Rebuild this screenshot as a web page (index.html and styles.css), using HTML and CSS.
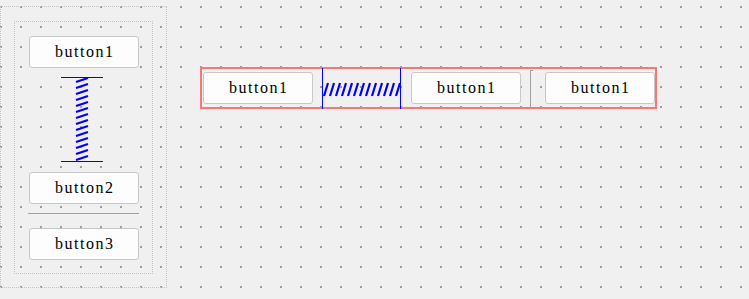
FILE: index.html
```html
<!DOCTYPE html>
<html lang="en">
<head>
    <meta charset="UTF-8">
    <title>Form</title>
    <link rel="stylesheet" href="styles.css">
</head>
<body>
<div class="form">
    <!-- vertical layout -->
    <div class="frame">
        <div class="vbox">
            <button class="btn">button1</button>
            <div class="vspacer">
                <svg width="42" height="85" viewBox="0 0 42 85">
                    <path class="edge" d="M0 0.5H42M0 84.5H42" />
                    <path class="coil" d="M15 5L27 1M15 11L27 7M15 17L27 13M15 23L27 19M15 29L27 25M15 35L27 31M15 41L27 37M15 47L27 43M15 53L27 49M15 59L27 55M15 65L27 61M15 71L27 67M15 77L27 73M15 83L27 79" />
                </svg>
            </div>
            <button class="btn btn-gap">button2</button>
            <div class="hline"></div>
            <button class="btn btn-sep">button3</button>
        </div>
    </div>

    <!-- horizontal layout -->
    <div class="hbox">
        <button class="btn">button1</button>
        <div class="hspacer">
            <svg width="79" height="41" viewBox="0 0 79 41">
                <path class="edge" d="M0.5 0V41M78.5 0V41" />
                <path class="coil" d="M2 28L6 15M8 28L12 15M14 28L18 15M20 28L24 15M26 28L30 15M32 28L36 15M38 28L42 15M44 28L48 15M50 28L54 15M56 28L60 15M62 28L66 15M68 28L72 15M74 28L78 15" />
            </svg>
        </div>
        <button class="btn btn-h">button1</button>
        <div class="vline"></div>
        <button class="btn btn-last">button1</button>
    </div>
</div>
</body>
</html>
```

FILE: styles.css
```css
* {
    margin: 0;
    padding: 0;
    box-sizing: border-box;
}
html, body {
    width: 749px;
    height: 299px;
    overflow: hidden;
}
body {
    background: #f0f0f0;
}
/* designer grid: 2px dots every 20px */
.form {
    position: relative;
    width: 749px;
    height: 299px;
    background: conic-gradient(from 0deg at 2px 2px, transparent 75%, #9c9c9c 0) 0 6px / 20px 20px;
}
.btn {
    flex: none;
    width: 110px;
    height: 32px;
    border: 1px solid #c8c8c8;
    border-radius: 3px;
    background: #fdfdfd;
    color: #000;
    font: 16px "Liberation Serif", "DejaVu Serif", serif;
    letter-spacing: 1.5px;
    text-indent: 1.5px;
    text-align: center;
}
/* left: dotted frame holding a vertical layout */
.frame {
    position: absolute;
    left: 0;
    top: 6px;
    width: 167px;
    height: 282px;
    border: 1px dotted #c4c4c4;
    padding: 14px 0 0 13px;
}
.vbox {
    display: flex;
    flex-direction: column;
    width: 139px;
    height: 253px;
    border: 1px dotted #c4c4c4;
    padding: 14px 13px 13px 14px;
}
.vspacer {
    margin-top: 9px;
    height: 85px;
    padding-left: 32px;
}
.vspacer svg,
.hspacer svg {
    display: block;
}
.edge {
    stroke: #0000ff;
    stroke-width: 1;
    fill: none;
}
.coil {
    stroke: #0000ff;
    stroke-width: 2.2;
    fill: none;
}
.btn-gap {
    margin-top: 10px;
}
.hline {
    margin: 9px 0 0 -1px;
    width: 111px;
    height: 1px;
    background: #a0a0a0;
}
.btn-sep {
    margin-top: 14px;
}
/* right: horizontal layout, red outline */
.hbox {
    position: absolute;
    left: 200px;
    top: 67px;
    width: 457px;
    height: 42px;
    border: 2px solid #f47a7a;
    padding-left: 1px;
    display: flex;
    align-items: center;
}
.hspacer {
    align-self: stretch;
    margin: -1px 0 -2px 9px;
}
.btn-h {
    margin-left: 10px;
}
.vline {
    align-self: stretch;
    margin: 1px 0 0 9px;
    width: 3px;
    border-left: 1px solid #a0a0a0;
    border-top: 1px solid #a0a0a0;
}
.btn-last {
    margin-left: 12px;
}
```
